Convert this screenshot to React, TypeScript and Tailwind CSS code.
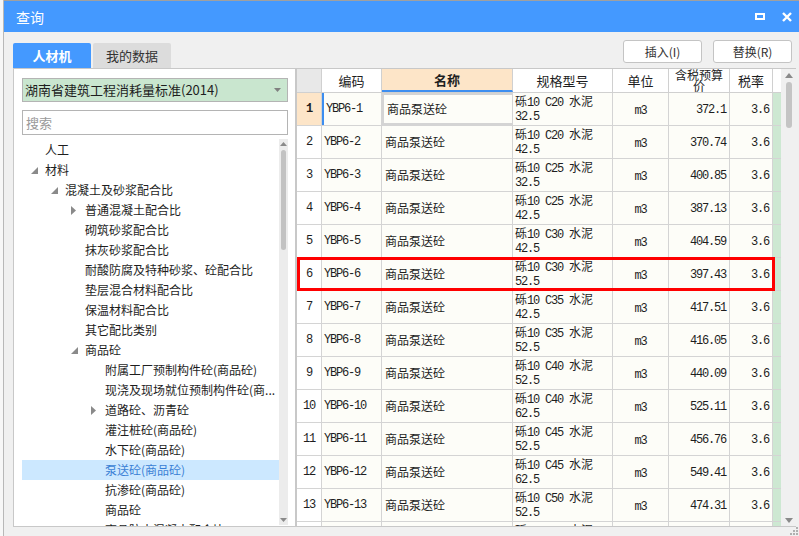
import React from "react";

const treeItems: { label: string; level: number; mark?: "open" | "closed"; selected?: boolean }[] = [
  { label: "人工", level: 0 },
  { label: "材料", level: 0, mark: "open" },
  { label: "混凝土及砂浆配合比", level: 1, mark: "open" },
  { label: "普通混凝土配合比", level: 2, mark: "closed" },
  { label: "砌筑砂浆配合比", level: 2 },
  { label: "抹灰砂浆配合比", level: 2 },
  { label: "耐酸防腐及特种砂浆、砼配合比", level: 2 },
  { label: "垫层混合材料配合比", level: 2 },
  { label: "保温材料配合比", level: 2 },
  { label: "其它配比类别", level: 2 },
  { label: "商品砼", level: 2, mark: "open" },
  { label: "附属工厂预制构件砼(商品砼)", level: 3 },
  { label: "现浇及现场就位预制构件砼(商...", level: 3 },
  { label: "道路砼、沥青砼", level: 3, mark: "closed" },
  { label: "灌注桩砼(商品砼)", level: 3 },
  { label: "水下砼(商品砼)", level: 3 },
  { label: "泵送砼(商品砼)", level: 3, selected: true },
  { label: "抗渗砼(商品砼)", level: 3 },
  { label: "商品砼", level: 3 },
  { label: "商品防水混凝土配合比", level: 3 },
];

const rows = [
  ["C20", "32.5", "372.1"],
  ["C20", "42.5", "370.74"],
  ["C25", "32.5", "400.85"],
  ["C25", "42.5", "387.13"],
  ["C30", "42.5", "404.59"],
  ["C30", "52.5", "397.43"],
  ["C35", "42.5", "417.51"],
  ["C35", "52.5", "416.05"],
  ["C40", "52.5", "440.09"],
  ["C40", "62.5", "525.11"],
  ["C45", "52.5", "456.76"],
  ["C45", "62.5", "549.41"],
  ["C50", "52.5", "474.31"],
  ["C50", "62.5", "498.20"],
];

function Mono({ children }: { children: React.ReactNode }) {
  return (
    <span className="font-['Liberation_Mono',monospace] text-[12px] tracking-[-1.2px]">{children}</span>
  );
}

function TreeRow({ item }: { item: (typeof treeItems)[number] }) {
  const pad = ["pl-[23px]", "pl-[43px]", "pl-[63px]", "pl-[83px]"][item.level];
  return (
    <div
      className={`relative flex h-[20px] shrink-0 items-center whitespace-nowrap ${pad} ${
        item.selected ? "bg-[#cce8ff] text-[#3a7fd5]" : "text-[#1e1e1e]"
      }`}
    >
      {item.mark === "open" && (
        <svg className="absolute -ml-[14px] mt-[1px]" width="7" height="7" viewBox="0 0 7 7">
          <polygon points="7,0 7,7 0,7" fill="#8a8a8a" />
        </svg>
      )}
      {item.mark === "closed" && (
        <svg className="absolute -ml-[14px]" width="5" height="9" viewBox="0 0 5 9">
          <polygon points="0,0 5,4.5 0,9" fill="#8a8a8a" />
        </svg>
      )}
      <span className="text-[12px] leading-[20px]">{item.label}</span>
    </div>
  );
}

export default function App() {
  return (
    <div className="flex h-[536px] w-[799px] overflow-hidden bg-[#f4f4f4] font-['Noto_Sans_CJK_SC','Noto_Sans',sans-serif]">
      <div className="w-[4px] shrink-0 border-r border-[#b8b8b8] bg-[#f7f7f7]" />
      <div className="flex flex-1 flex-col border-t border-[#a0a0a0]">
        {/* title bar */}
        <div className="flex h-[31px] shrink-0 items-center justify-between bg-[#4499ff] pl-[12px] pr-[7px]">
          <span className="text-[14px] leading-none text-white">查询</span>
          <div className="flex items-center gap-[17px]">
            <div className="h-[7px] w-[10px] border-2 border-white" />
            <svg width="10" height="10" viewBox="0 0 10 10">
              <path d="M1 1 L9 9 M9 1 L1 9" stroke="white" strokeWidth="2.4" />
            </svg>
          </div>
        </div>

        {/* body */}
        <div className="flex flex-1 flex-col bg-[#f0f0f0]">
          <div className="flex h-[36px] shrink-0 items-start justify-between pl-[9px] pr-[3px]">
            <div className="mt-[11px] flex gap-[2px]">
              <div className="flex h-[25px] w-[78px] items-center justify-center rounded-t-[2px] bg-[#4499ff] text-[13px] font-bold text-white">
                人材机
              </div>
              <div className="flex h-[25px] w-[78px] items-center justify-center rounded-t-[2px] bg-[#dcdcdc] text-[13px] text-[#333]">
                我的数据
              </div>
            </div>
            <div className="mt-[8px] flex gap-[11px] pr-[4px]">
              <button className="flex h-[23px] w-[79px] items-center justify-center rounded-[3px] border border-[#c4c4c4] bg-white text-[12px] text-[#333]">
                插入(I)
              </button>
              <button className="flex h-[23px] w-[79px] items-center justify-center rounded-[3px] border border-[#c4c4c4] bg-white text-[12px] text-[#333]">
                替换(R)
              </button>
            </div>
          </div>

          <div className="flex h-[459px] shrink-0 pl-[9px]">
            {/* left panel */}
            <div className="flex w-[283px] shrink-0 flex-col border border-[#c8c8c8] bg-white">
              <div className="ml-[8px] mt-[9px] flex h-[24px] w-[266px] items-center justify-between border border-[#b4b4b4] bg-[#c9e6cf] pl-[2px] pr-[6px]">
                <span className="text-[13px] text-[#1e1e1e]">湖南省建筑工程消耗量标准(2014)</span>
                <svg width="7" height="4" viewBox="0 0 7 4">
                  <polygon points="0,0 7,0 3.5,4" fill="#808080" />
                </svg>
              </div>
              <div className="ml-[8px] mt-[8px] flex h-[25px] w-[266px] items-center border border-[#b4b4b4] bg-white pl-[3px]">
                <span className="text-[13px] text-[#9a9a9a]">搜索</span>
              </div>
              <div className="mt-[4px] flex min-h-0 flex-1">
                <div className="ml-[8px] flex w-[257px] flex-col overflow-hidden pt-[1px]">
                  {treeItems.map((it, i) => (
                    <TreeRow key={i} item={it} />
                  ))}
                </div>
                <div className="mb-[1px] flex w-[9px] flex-col items-center bg-[#ececec]">
                  <svg className="mt-[3px]" width="7" height="4" viewBox="0 0 7 4">
                    <polygon points="3.5,0 7,4 0,4" fill="#8a8a8a" />
                  </svg>
                  <div className="mt-[4px] h-[100px] w-[5px] rounded-full bg-[#c2c2c2]" />
                  <div className="flex-1" />
                  <svg className="mb-[3px]" width="7" height="4" viewBox="0 0 7 4">
                    <polygon points="0,0 7,0 3.5,4" fill="#8a8a8a" />
                  </svg>
                </div>
              </div>
            </div>

            {/* grid */}
            <div className="flex w-[500px] shrink-0 border-b border-l border-t border-[#c8c8c8] bg-white">
              <div className="flex w-[484px] flex-col overflow-hidden">
                <div className="flex h-[24px] shrink-0 border-b border-[#d0d0d0] text-[13px] text-[#1e1e1e]">
                  <div className="w-[25px] border-r border-[#d0d0d0] bg-[#e8e8e8]" />
                  <div className="flex w-[60px] items-center justify-center border-r border-[#d0d0d0]">编码</div>
                  <div className="flex w-[131px] items-center justify-center border-r border-b-2 border-[#d0d0d0] border-b-[#3d8ef0] bg-[#fde5c8] font-bold">
                    名称
                  </div>
                  <div className="flex w-[100px] items-center justify-center border-r border-[#d0d0d0]">规格型号</div>
                  <div className="flex w-[56px] items-center justify-center border-r border-[#d0d0d0]">单位</div>
                  <div className="flex w-[61px] flex-col items-center justify-end overflow-hidden border-r border-[#d0d0d0] pb-[1px] text-[12px] leading-[11px]">
                    <span>含税预算</span>
                    <span>价</span>
                  </div>
                  <div className="flex w-[43px] items-center justify-center border-r border-[#d0d0d0]">税率</div>
                  <div className="w-[8px]" />
                </div>
                {rows.map((r, i) => {
                  const n = i + 1;
                  const first = i === 0;
                  return (
                    <div key={i} className="relative flex h-[33px] shrink-0 border-b border-[#d4d4d4] bg-[#fdfdf8] text-[#1e1e1e]">
                      <div
                        className={`flex w-[25px] items-center justify-center border-r border-[#d4d4d4] ${
                          first ? "bg-[#fde5c8] font-bold" : "bg-white"
                        }`}
                      >
                        <Mono>{n}</Mono>
                      </div>
                      <div
                        className={`flex w-[60px] items-center border-r border-[#d4d4d4] pl-[2px] ${
                          first ? "border-l-2 border-l-[#3d8ef0]" : ""
                        }`}
                      >
                        <Mono>YBP6-{n}</Mono>
                      </div>
                      <div
                        className={`flex w-[131px] items-center border-r border-[#d4d4d4] pl-[3px] text-[12px] ${
                          first ? "border-2 border-[#7a7a7a] pl-[2px]" : ""
                        }`}
                      >
                        商品泵送砼
                      </div>
                      <div className="flex w-[100px] flex-col justify-center border-r border-[#d4d4d4] pl-[2px] text-[12px] leading-[14px]">
                        <span>
                          砾<Mono>10 {r[0]} </Mono>水泥
                        </span>
                        <Mono>{r[1]}</Mono>
                      </div>
                      <div className="flex w-[56px] items-center justify-center border-r border-[#d4d4d4] pt-[3px]">
                        <Mono>m3</Mono>
                      </div>
                      <div className="flex w-[61px] items-center justify-end border-r border-[#d4d4d4] pr-[3px] pt-[2px]">
                        <Mono>{r[2]}</Mono>
                      </div>
                      <div className="flex w-[43px] items-center justify-end border-r border-[#d4d4d4] pr-[3px] pt-[2px]">
                        <Mono>3.6</Mono>
                      </div>
                      <div className="w-[8px] bg-[#cde8d2]" />
                      {n === 6 && (
                        <div className="absolute -top-[1px] bottom-[-1px] left-0 w-[478px] border-[3px] border-[#ff0000]" />
                      )}
                    </div>
                  );
                })}
              </div>
              <div className="flex w-[15px] flex-col items-center bg-[#f0f0f0]">
                <svg className="mt-[4px]" width="8" height="5" viewBox="0 0 8 5">
                  <polygon points="4,0 8,5 0,5" fill="#8a8a8a" />
                </svg>
                <div className="mt-[4px] h-[46px] w-[6px] rounded-full bg-[#c4c4c4]" />
                <div className="flex-1" />
                <svg className="mb-[3px]" width="8" height="5" viewBox="0 0 8 5">
                  <polygon points="0,0 8,0 4,5" fill="#8a8a8a" />
                </svg>
              </div>
            </div>
          </div>

          <div className="flex flex-1 items-end justify-end pr-[1px] pb-[1px]">
            <svg width="8" height="8" viewBox="0 0 8 8">
              <rect x="6" y="0" width="2" height="2" fill="#b0b0b0" />
              <rect x="3" y="3" width="2" height="2" fill="#b0b0b0" />
              <rect x="6" y="3" width="2" height="2" fill="#b0b0b0" />
              <rect x="0" y="6" width="2" height="2" fill="#b0b0b0" />
              <rect x="3" y="6" width="2" height="2" fill="#b0b0b0" />
              <rect x="6" y="6" width="2" height="2" fill="#b0b0b0" />
            </svg>
          </div>
        </div>
      </div>
    </div>
  );
}
